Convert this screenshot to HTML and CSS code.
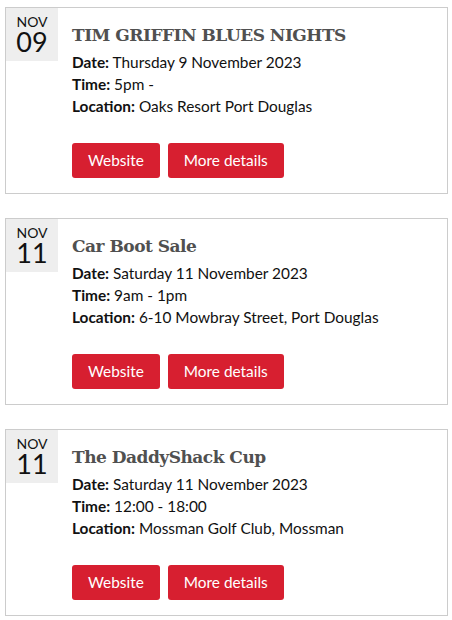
FILE: index.html
```html
<!DOCTYPE html>
<html>
<head>
<meta charset="utf-8">
<link rel="stylesheet" href="styles.css">
</head>
<body>
<div class="events">
  <div class="card">
    <div class="date"><span class="mon">NOV</span><span class="day">09</span></div>
    <div class="info">
      <h2 class="title">TIM GRIFFIN BLUES NIGHTS</h2>
      <p class="row"><b>Date:</b> Thursday 9 November 2023</p>
      <p class="row"><b>Time:</b> 5pm -</p>
      <p class="row"><b>Location:</b> Oaks Resort Port Douglas</p>
      <div class="btns"><a class="btn">Website</a><a class="btn">More details</a></div>
    </div>
  </div>
  <div class="card">
    <div class="date"><span class="mon">NOV</span><span class="day">11</span></div>
    <div class="info">
      <h2 class="title">Car Boot Sale</h2>
      <p class="row"><b>Date:</b> Saturday 11 November 2023</p>
      <p class="row"><b>Time:</b> 9am - 1pm</p>
      <p class="row"><b>Location:</b> 6-10 Mowbray Street, Port Douglas</p>
      <div class="btns"><a class="btn">Website</a><a class="btn">More details</a></div>
    </div>
  </div>
  <div class="card">
    <div class="date"><span class="mon">NOV</span><span class="day">11</span></div>
    <div class="info">
      <h2 class="title">The DaddyShack Cup</h2>
      <p class="row"><b>Date:</b> Saturday 11 November 2023</p>
      <p class="row"><b>Time:</b> 12:00 - 18:00</p>
      <p class="row"><b>Location:</b> Mossman Golf Club, Mossman</p>
      <div class="btns"><a class="btn">Website</a><a class="btn">More details</a></div>
    </div>
  </div>
</div>
</body>
</html>
```
FILE: styles.css
```css
html, body { margin: 0; padding: 0; background: #fff; }
body { font-family: Lato, "Liberation Sans", sans-serif; color: #111; }
.events { padding: 7px 4px 0 5px; display: flex; flex-direction: column; gap: 24px; }
.card { display: flex; border: 1px solid #ccc; height: 185px; gap: 14px; }
.date { flex: none; width: 52px; height: 53px; background: #eeeeee; display: flex; flex-direction: column; align-items: center; }
.mon { font-size: 14px; line-height: 12px; margin-top: 8px; color: #111; }
.day { font-size: 27px; line-height: 28px; color: #111; }
.info { padding-top: 14px; }
.title { margin: 0 0 3px; font-family: "DejaVu Serif", serif; font-weight: bold; font-size: 17px; line-height: 26px; letter-spacing: -0.5px; color: #505050; }
.row { margin: 0; font-size: 15.4px; line-height: 22px; }
.row b { font-weight: bold; }
.btns { display: flex; gap: 8px; margin-top: 26px; }
.btn { background: #d71f30; color: #fff; font-size: 15.4px; line-height: 19px; padding: 8px 16px; border-radius: 3px; }
```
